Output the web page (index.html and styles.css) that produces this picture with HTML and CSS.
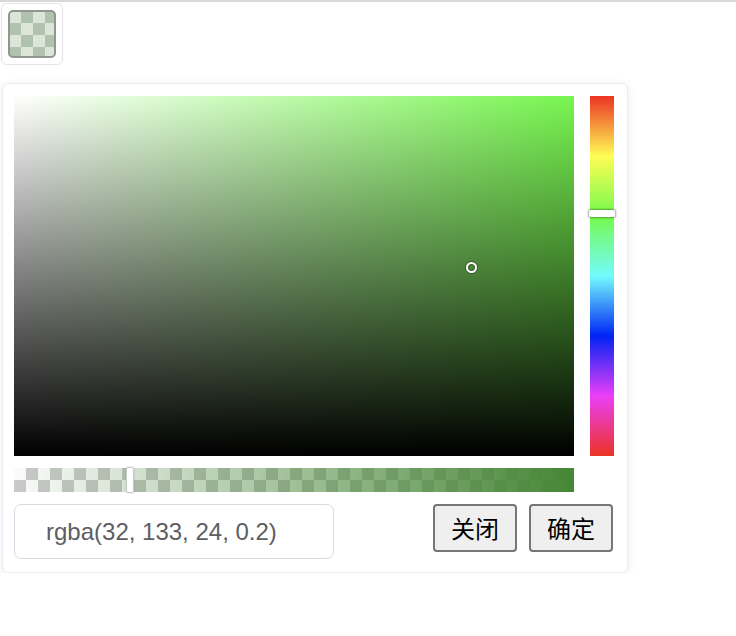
FILE: index.html
```html
<!DOCTYPE html>
<html lang="zh-CN">
<head>
<meta charset="utf-8">
<title>Color Picker</title>
<link rel="stylesheet" href="styles.css">
</head>
<body>
<div class="topline"></div>
<div class="trigger">
  <div class="swatch"><div class="swatch-color"></div></div>
</div>
<div class="panel">
  <div class="main-row">
    <div class="sat">
      <div class="sat-white"></div>
      <div class="sat-black"></div>
      <div class="sat-cursor"></div>
    </div>
    <div class="hue">
      <div class="hue-thumb"></div>
    </div>
  </div>
  <div class="alpha">
    <div class="alpha-grad"></div>
    <div class="alpha-thumb"></div>
  </div>
  <div class="footer">
    <input class="value" type="text" value="rgba(32, 133, 24, 0.2)">
    <div class="actions">
      <button class="btn">关闭</button>
      <button class="btn">确定</button>
    </div>
  </div>
</div>
</body>
</html>
```

FILE: styles.css
```css
html, body {
  margin: 0;
  padding: 0;
  background: #ffffff;
}

.topline {
  height: 2px;
  background: #d9d9d9;
}

.trigger {
  margin: 1px 0 0 1px;
  width: 62px;
  height: 62px;
  box-sizing: border-box;
  border: 1px solid #e4e4e4;
  border-radius: 6px;
  padding: 6px;
}

.swatch {
  width: 48px;
  height: 48px;
  box-sizing: border-box;
  border: 2px solid #8f978e;
  border-radius: 5px;
  overflow: hidden;
  background-color: #dbe6d8;
  background-image:
    linear-gradient(45deg, #b1c2ae 25%, transparent 25%, transparent 75%, #b1c2ae 75%),
    linear-gradient(45deg, #b1c2ae 25%, transparent 25%, transparent 75%, #b1c2ae 75%);
  background-size: 24px 24px;
  background-position: -1px -1px, 11px 11px;
}

.panel {
  margin: 18px 0 0 2px;
  width: 626px;
  box-sizing: border-box;
  border: 1px solid #e9ecf3;
  border-radius: 6px;
  box-shadow: 0 2px 10px 0 rgba(0, 0, 0, 0.08);
  padding: 12px 13px 13px 11px;
  background: #fff;
}

.main-row {
  display: flex;
  gap: 16px;
}

.sat {
  position: relative;
  width: 560px;
  height: 360px;
  background: rgb(120, 246, 80);
}

.sat-white,
.sat-black {
  position: absolute;
  inset: 0;
}

.sat-white {
  background: linear-gradient(to right, #fff, rgba(255, 255, 255, 0));
}

.sat-black {
  background: linear-gradient(to top, #000, rgba(0, 0, 0, 0));
}

.sat-cursor {
  position: absolute;
  left: 452px;
  top: 166px;
  width: 7px;
  height: 7px;
  border: 2px solid #fff;
  border-radius: 50%;
  box-shadow: 0 0 0 1px rgba(0, 0, 0, 0.3), inset 0 0 0 1px rgba(0, 0, 0, 0.3);
}

.hue {
  position: relative;
  width: 24px;
  height: 360px;
  background: linear-gradient(to bottom,
    #eb3324 0%,
    #fffd55 16.67%,
    #75fa4c 33.33%,
    #73fbfd 50%,
    #0023f5 66.67%,
    #ea3ff7 83.33%,
    #eb3324 100%);
}

.hue-thumb {
  position: absolute;
  left: -1px;
  top: 114px;
  width: 26px;
  height: 7px;
  box-sizing: border-box;
  background: #fff;
  border-radius: 2px;
  box-shadow: 0 0 2px 1px rgba(0, 0, 0, 0.35);
}

.alpha {
  position: relative;
  margin-top: 12px;
  width: 560px;
  height: 24px;
  background-color: #fbfbfb;
  background-image:
    linear-gradient(45deg, #c9c9c9 25%, transparent 25%, transparent 75%, #c9c9c9 75%),
    linear-gradient(45deg, #c9c9c9 25%, transparent 25%, transparent 75%, #c9c9c9 75%);
  background-size: 24px 24px;
  background-position: 0 0, 12px 12px;
}

.alpha-grad {
  position: absolute;
  inset: 0;
  background: linear-gradient(to right, rgba(70, 134, 54, 0), rgb(70, 134, 54));
}

.alpha-thumb {
  position: absolute;
  left: 112px;
  top: -1px;
  width: 8px;
  height: 26px;
  box-sizing: border-box;
  background: #fff;
  border: 1px solid #c8c8c8;
  border-radius: 2px;
  box-shadow: 0 0 2px rgba(0, 0, 0, 0.2);
}

.footer {
  margin-top: 12px;
  display: flex;
  justify-content: space-between;
  align-items: flex-start;
}

.value {
  width: 320px;
  height: 55px;
  box-sizing: border-box;
  margin: 0;
  border: 1px solid #d8dbe2;
  border-radius: 7px;
  padding: 0 10px 0 31px;
  font-family: "Liberation Sans", Arial, sans-serif;
  font-size: 24px;
  color: #5c5e63;
  outline: none;
  background: #fff;
}

.actions {
  display: flex;
  gap: 12px;
  margin-right: 1px;
}

.btn {
  width: 84px;
  height: 48px;
  box-sizing: border-box;
  margin: 0;
  padding: 0;
  border: 2px solid #767676;
  border-radius: 4px;
  background: #efefef;
  color: #000;
  font-family: "Noto Sans CJK SC", "Liberation Sans", sans-serif;
  font-size: 24px;
  line-height: 1;
}
```
